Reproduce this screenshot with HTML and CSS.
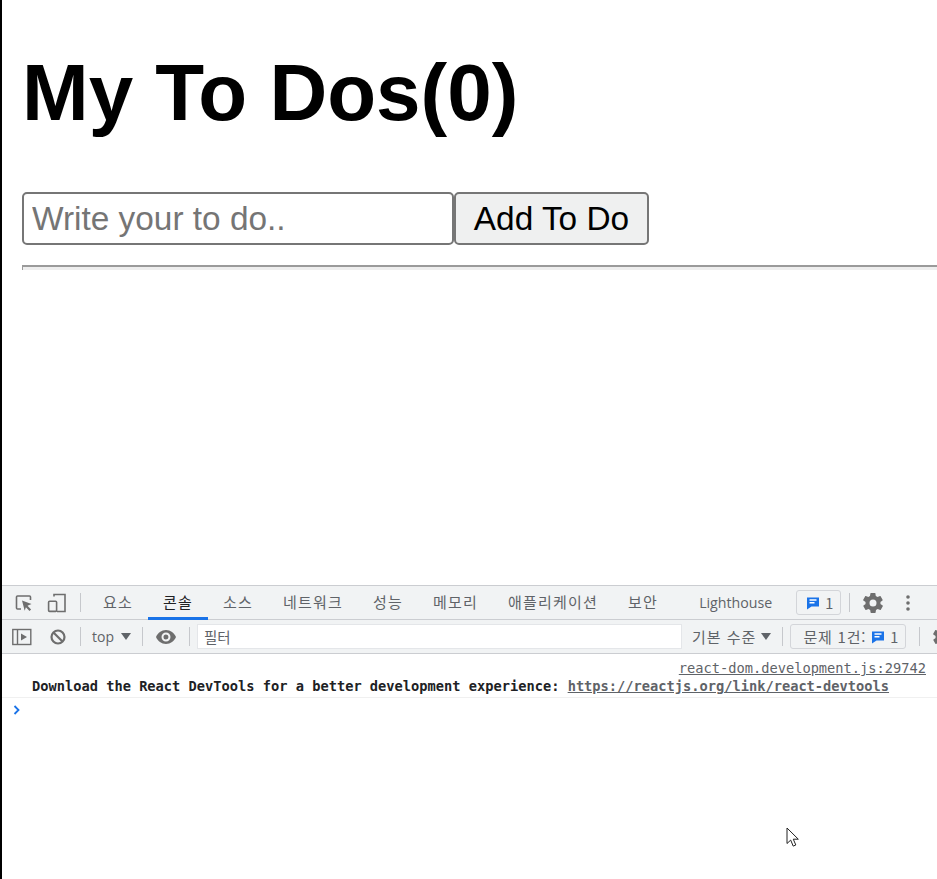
FILE: index.html
```html
<!DOCTYPE html>
<html lang="ko">
<head>
<meta charset="utf-8">
<title>My To Dos</title>
<link rel="stylesheet" href="styles.css">
</head>
<body>
<div class="frame">
  <main class="app">
    <h1 class="title">My To Dos(0)</h1>
    <form class="todo-form">
      <input class="todo-input" type="text" placeholder="Write your to do..">
      <button class="todo-btn" type="button">Add To Do</button>
    </form>
    <hr class="rule">
  </main>
  <section class="devtools">
    <div class="bar bar-tabs">
      <div class="icon-group">
        <svg class="ico" width="20" height="20" viewBox="0 0 20 20"><path d="M7 16H3.5a1 1 0 0 1-1-1V4a1 1 0 0 1 1-1h12a1 1 0 0 1 1 1v3" fill="none" stroke="#6e6e6e" stroke-width="1.6"/><path d="M8 7.5l9.5 3.6-4 1.6 3.6 3.8-1.6 1.5-3.6-3.8-1.2 3.6z" fill="#6e6e6e"/></svg>
        <svg class="ico" width="20" height="20" viewBox="0 0 20 20"><path d="M7 3.5V1.500h11v17H10" fill="none" stroke="#6e6e6e" stroke-width="1.6"/><rect x="1.6" y="8.200" width="8" height="10.2" rx="1" fill="none" stroke="#6e6e6e" stroke-width="1.6"/></svg>
      </div>
      <span class="sep sep-tabs"></span>
      <nav class="tabs">
        <span class="tab">요소</span>
        <span class="tab tab-on">콘솔</span>
        <span class="tab">소스</span>
        <span class="tab">네트워크</span>
        <span class="tab">성능</span>
        <span class="tab">메모리</span>
        <span class="tab">애플리케이션</span>
        <span class="tab">보안</span>
        <span class="tab tab-latin">Lighthouse</span>
      </nav>
      <span class="chip chip-top">
        <svg width="14" height="14" viewBox="0 0 14 14"><path d="M1 1.5h12v9H5.5L1 13.5z" fill="#1a73e8"/><path d="M3.5 4h7M3.5 6.8h5" stroke="#fff" stroke-width="1.4"/></svg>
        <span>1</span>
      </span>
      <span class="sep sep-gear"></span>
      <svg class="gear" width="20" height="20" viewBox="2 2 20 20"><path fill="#6e6e6e" d="M19.4 13c.1-.3.1-.7.1-1s0-.7-.1-1l2.100-1.600c.2-.2.2-.4.1-.6l-2-3.500c-.1-.2-.4-.3-.6-.2l-2.500 1c-.5-.4-1.100-.7-1.700-1l-.4-2.600c0-.3-.2-.4-.5-.4h-4c-.3 0-.5.2-.5.400l-.4 2.600c-.6.3-1.200.6-1.700 1l-2.500-1c-.2-.1-.5 0-.6.2l-2 3.500c-.1.200-.1.500.1.600L4.600 11c-.1.300-.1.700-.1 1s0 .7.100 1l-2.100 1.600c-.2.200-.2.400-.1.600l2 3.500c.1.200.4.300.6.200l2.500-1c.5.400 1.100.7 1.700 1l.4 2.600c0 .3.200.4.500.4h4c.3 0 .5-.2.500-.4l.4-2.600c.6-.3 1.200-.6 1.700-1l2.500 1c.2.100.5 0 .6-.2l2-3.500c.1-.2.100-.5-.1-.6zM12 15.500a3.500 3.500 0 1 1 0-7 3.500 3.500 0 0 1 0 7z"/></svg>
      <svg class="dots" width="4" height="16" viewBox="0 0 4 16"><circle cx="2" cy="2" r="1.800" fill="#6e6e6e"/><circle cx="2" cy="8" r="1.800" fill="#6e6e6e"/><circle cx="2" cy="14" r="1.800" fill="#6e6e6e"/></svg>
    </div>
    <div class="bar bar-filter">
      <svg class="sidebar-ico" width="20" height="18" viewBox="0 0 20 18"><rect x=".8" y="1.500" width="18" height="15" fill="none" stroke="#6e6e6e" stroke-width="1.400"/><path d="M5.500 1.500v15" stroke="#6e6e6e" stroke-width="1.400"/><path d="M9 5.500l6 3.500-6 3.500z" fill="#6e6e6e"/></svg>
      <svg class="clear-ico" width="16" height="16" viewBox="0 0 16 16"><circle cx="8" cy="8" r="6.500" fill="none" stroke="#6e6e6e" stroke-width="2.200"/><path d="M3.500 3.500l9 9" stroke="#6e6e6e" stroke-width="2.200"/></svg>
      <span class="sep sep-a"></span>
      <span class="ctx">top</span>
      <span class="caret caret-top"></span>
      <span class="sep sep-b"></span>
      <svg class="eye" width="20" height="14" viewBox="0 0 20 14"><path fill="#6e6e6e" fill-rule="evenodd" d="M10 0C5.500 0 1.700 2.900 0 7c1.700 4.100 5.500 7 10 7s8.300-2.900 10-7c-1.700-4.100-5.500-7-10-7zm0 11.500a4.500 4.500 0 1 1 0-9 4.500 4.500 0 0 1 0 9zM10 4.500a2.500 2.500 0 1 0 0 5 2.500 2.500 0 0 0 0-5z"/></svg>
      <span class="sep sep-c"></span>
      <span class="filter">필터</span>
      <span class="level">기본 수준</span>
      <span class="caret caret-level"></span>
      <span class="sep sep-d"></span>
      <span class="chip chip-issues">
        <span class="issues-text">문제 1건:</span>
        <svg width="14" height="14" viewBox="0 0 14 14"><path d="M1 1.500h12v9H5.500L1 13.500z" fill="#1a73e8"/><path d="M3.500 4h7M3.500 6.800h5" stroke="#fff" stroke-width="1.400"/></svg>
        <span>1</span>
      </span>
      <span class="sep sep-e"></span>
      <svg class="gear" width="20" height="20" viewBox="2 2 20 20"><path fill="#6e6e6e" d="M19.400 13c.1-.3.1-.7.1-1s0-.7-.1-1l2.100-1.600c.2-.2.2-.4.1-.6l-2-3.500c-.1-.2-.4-.3-.6-.2l-2.500 1c-.5-.4-1.100-.7-1.700-1l-.4-2.600c0-.3-.2-.4-.5-.4h-4c-.3 0-.5.2-.5.400l-.4 2.600c-.6.3-1.200.6-1.700 1l-2.500-1c-.2-.1-.5 0-.6.2l-2 3.500c-.1.200-.1.500.1.600L4.600 11c-.1.300-.1.700-.1 1s0 .7.100 1l-2.100 1.600c-.2.200-.2.400-.1.600l2 3.500c.1.200.4.300.6.200l2.500-1c.5.400 1.100.7 1.700 1l.4 2.600c0 .3.200.4.500.4h4c.3 0 .5-.2.500-.4l.4-2.600c.6-.3 1.200-.6 1.700-1l2.500 1c.2.100.5 0 .6-.2l2-3.500c.1-.2.100-.5-.1-.6zM12 15.500a3.500 3.500 0 1 1 0-7 3.500 3.500 0 0 1 0 7z"/></svg>
    </div>
    <div class="log">
      <div class="log-src"><span class="u">react-dom.development.js:29742</span></div>
      <div class="log-msg">Download the React DevTools for a better development experience: <span class="u link">https://reactjs.org/link/react-devtools</span></div>
    </div>
    <div class="prompt">
      <svg width="8" height="10" viewBox="0 0 8 10"><path d="M1.500 1l4 4-4 4" fill="none" stroke="#1a73e8" stroke-width="1.800"/></svg>
    </div>
  </section>
</div>
<svg class="cursor" width="14" height="21" viewBox="0 0 14 21"><path d="M1 1v15.500l3.700-3.400 2.500 6 2.600-1.100-2.500-5.800h5z" fill="#fff" stroke="#222" stroke-width="1"/></svg>
</body>
</html>
```

FILE: styles.css
```css
* { box-sizing: border-box; }
html, body { margin: 0; height: 100%; overflow: hidden; background: #fff; }
body { position: relative; font-family: "Liberation Sans", Arial, sans-serif; }
.frame { height: 879px; border-left: 2px solid #000; display: flex; flex-direction: column; overflow: hidden; }

.app { height: 585px; flex: none; padding: 0 0 0 20px; }
.title { margin: 0; padding-top: 44px; font-size: 80px; line-height: 98px; font-weight: 700; color: #000; white-space: nowrap; }
.todo-form { display: flex; margin-top: 50px; }
.todo-input { width: 432px; height: 53px; padding: 1px 8px; border: 2px solid #767676; border-radius: 5px; font: 33.400px "Liberation Sans", Arial, sans-serif; background: #fff; color: #000; }
.todo-input::placeholder { color: #757575; opacity: 1; }
.todo-btn { width: 195px; height: 53px; padding: 0; border: 2px solid #767676; border-radius: 5px; background: #eff0f0; color: #000; font: 33.400px "Liberation Sans", Arial, sans-serif; }
.rule { margin: 20px 0 0; height: 5px; border: 0; border-top: 2px solid #9a9a9a; border-left: 1px solid #9a9a9a; background: #eeeeee; }

.devtools { flex: 1; display: flex; flex-direction: column; font-family: "Noto Sans CJK KR", "Noto Sans", sans-serif; color: #5f6368; }
.bar { display: flex; align-items: center; background: #f1f3f4; flex: none; }
.bar-tabs { height: 35px; border-top: 1px solid #cbcdd1; border-bottom: 1px solid #cbcdd1; padding-left: 12px; }
.bar-filter { height: 34px; border-bottom: 1px solid #cbcdd1; padding-left: 10px; font-size: 14px; }
.icon-group { display: flex; gap: 13px; }
.ico { flex: none; }
.sep { flex: none; width: 1px; background: #c6c8cc; height: 19px; }
.sep-tabs { margin: 0 7px 0 13px; }
.tabs { display: flex; align-self: stretch; margin-bottom: -1px; }
.tab { display: flex; align-items: center; height: 100%; padding: 0 15px; font-size: 15px; letter-spacing: 1.200px; line-height: 20px; white-space: nowrap; border-bottom: 3px solid transparent; }
.tab-on { color: #202124; border-bottom-color: #1a73e8; }
.tab-latin { margin-left: 26px; padding: 2px 0 0; margin-right: 24px; font-family: "Open Sans", sans-serif; font-size: 14.200px; letter-spacing: 0; }
.chip { display: inline-flex; align-items: center; border: 1px solid #d3d5d9; border-radius: 3px; flex: none; font-size: 14.500px; gap: 5px; }
.chip-top { height: 25px; width: 45px; padding-left: 9px; }
.sep-gear { margin: 0 13px 0 8px; }
.gear { flex: none; }
.dots { flex: none; margin-left: 23px; }

.sidebar-ico { flex: none; }
.clear-ico { flex: none; margin-left: 18px; }
.sep-a { margin: 0 11px 0 14px; }
.ctx { font-family: "Open Sans", sans-serif; font-size: 14px; }
.caret { flex: none; width: 0; height: 0; border-left: 5px solid transparent; border-right: 5px solid transparent; border-top: 7px solid #5f6368; }
.caret-top { margin-left: 7px; }
.sep-b { margin: 0 13px 0 11px; }
.eye { flex: none; }
.sep-c { margin: 0 7px 0 13px; }
.filter { flex: none; width: 485px; height: 25px; line-height: 24px; padding-left: 6px; background: #fff; border: 1px solid #e4e6e9; font-size: 14.500px; color: #5f6368; }
.level { margin-left: 10px; white-space: nowrap; font-size: 15px; letter-spacing: 1px; }
.caret-level { margin-left: 5px; }
.sep-d { margin: 0 7px 0 11px; }
.chip-issues { height: 25px; width: 116px; padding-left: 12px; white-space: nowrap; }
.issues-text { font-size: 15px; letter-spacing: .8px; }
.sep-e { margin: 0 13px 0 13px; }

.log { flex: none; height: 44px; border-bottom: 1px solid #f0f0f0; font-family: "DejaVu Sans Mono", monospace; font-size: 13.700px; line-height: 18px; padding-top: 5px; white-space: nowrap; }
.log-src { text-align: right; padding-right: 11px; color: #5f6368; }
.log-msg { padding-left: 30px; font-weight: 700; color: #202124; }
.u { text-decoration: underline; }
.link { color: #5f6368; }
.prompt { padding: 5px 0 0 11px; line-height: 10px; }
.cursor { position: absolute; left: 786px; top: 827px; }
```
